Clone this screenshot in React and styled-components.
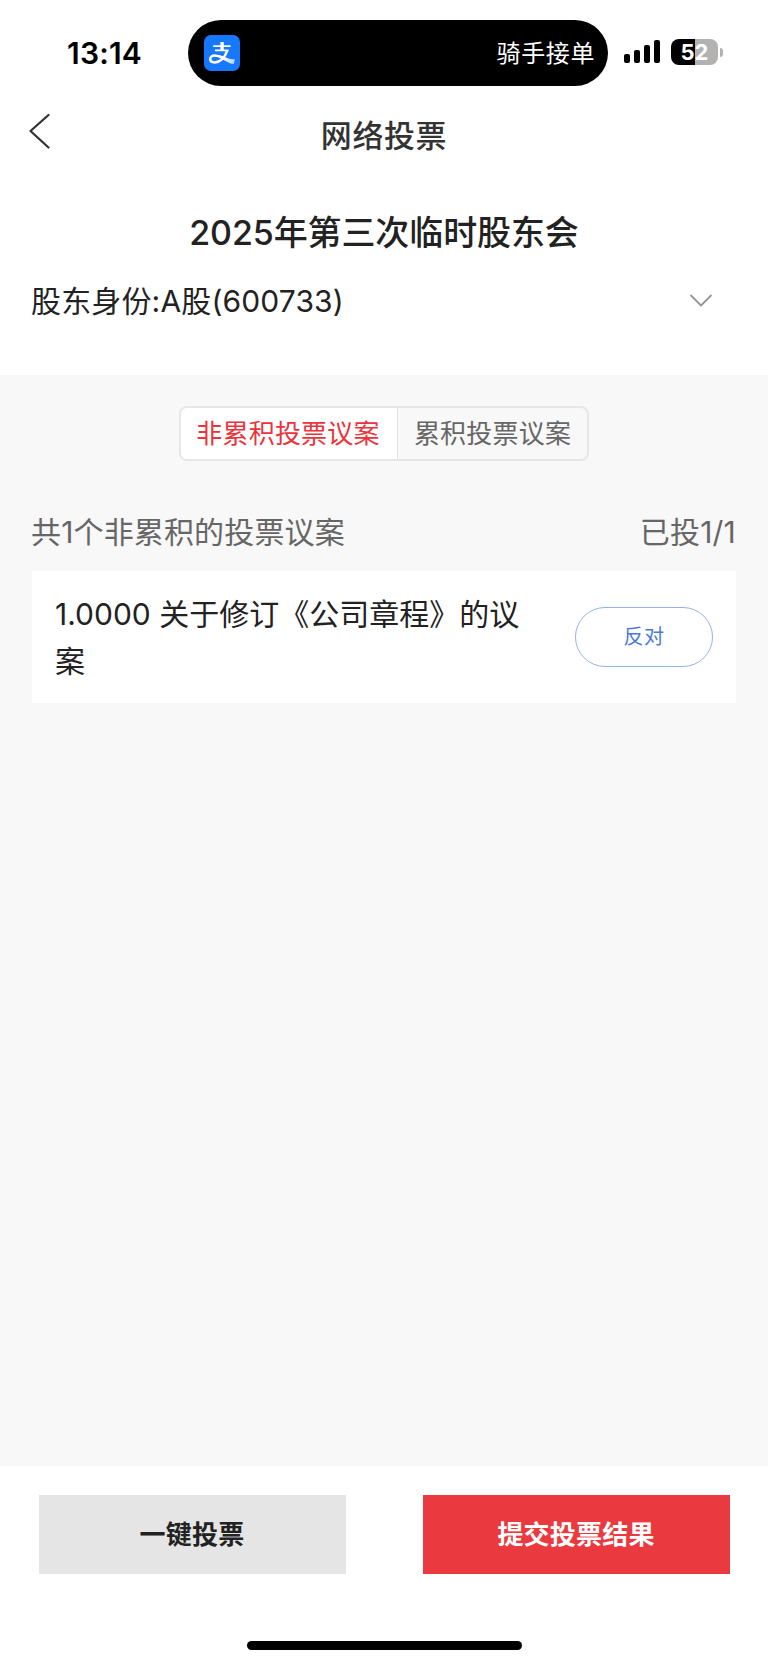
import React, { useState } from 'react';
import styled, { createGlobalStyle } from 'styled-components';

const bars = [9, 13, 18, 23];

const tabs = ['非累积投票议案', '累积投票议案'];

const App = () => {
  const [active, setActive] = useState(0);

  return (
    <Page>
      <GlobalStyle />
      <StatusBar>
        <Time>13:14</Time>
        <Island>
          <PayLogo />
          <IslandText>骑手接单</IslandText>
        </Island>
        <Signal>
          {bars.map((h) => (
            <Bar key={h} $h={h} />
          ))}
        </Signal>
        <Battery>52</Battery>
        <BatteryCap />
      </StatusBar>

      <NavBar>
        <BackButton aria-label="返回">
          <svg width="24" height="38" viewBox="0 0 24 38" fill="none">
            <path d="M20.5 3L2.5 19L20.5 35.5" stroke="#333" strokeWidth="2.3" strokeLinecap="round" strokeLinejoin="round" />
          </svg>
        </BackButton>
        <NavTitle>网络投票</NavTitle>
      </NavBar>

      <Meeting>
        <MeetingTitle>2025年第三次临时股东会</MeetingTitle>
        <Identity>
          <IdentityText>股东身份:A股(600733)</IdentityText>
          <svg width="24" height="14" viewBox="0 0 24 14" fill="none">
            <path d="M2 1.5L12 11.5L22 1.5" stroke="#969696" strokeWidth="1.8" strokeLinecap="round" strokeLinejoin="round" />
          </svg>
        </Identity>
      </Meeting>

      <Content>
        <Tabs>
          {tabs.map((tab, i) => (
            <Tab key={tab} $active={i === active} onClick={() => setActive(i)}>
              {tab}
            </Tab>
          ))}
        </Tabs>
        <Summary>
          <Count>共1个非累积的投票议案</Count>
          <Voted>已投1/1</Voted>
        </Summary>
        <Card>
          <Proposal>1.0000 关于修订《公司章程》的议案</Proposal>
          <Vote>反对</Vote>
        </Card>
      </Content>

      <Footer>
        <Actions>
          <Action>一键投票</Action>
          <Action $primary>提交投票结果</Action>
        </Actions>
        <HomeIndicator />
      </Footer>
    </Page>
  );
};

const PayLogo = () => (
  <svg width="36" height="36" viewBox="0 0 36 36" fill="none">
    <defs>
      <linearGradient id="tail" x1="18" y1="22" x2="31" y2="28" gradientUnits="userSpaceOnUse">
        <stop offset="0" stopColor="#fff" />
        <stop offset="1" stopColor="#fff" stopOpacity="0.65" />
      </linearGradient>
    </defs>
    <rect width="36" height="36" rx="7" fill="#1677ff" />
    <path d="M9.2 11.2H26.6M11 15.4H24.6" stroke="#fff" strokeWidth="1.8" />
    <path d="M16.4 7H19.8V15.6H16.4Z" fill="#fff" />
    <path d="M23.4 15.2C21.6 20.6 17.6 27.4 10.6 27.4C4.8 27.4 4.6 20.6 10.8 20.6C14 20.6 16.4 21.8 19.4 23.2" stroke="#fff" strokeWidth="2.5" />
    <path d="M13.6 19.9C19 20.1 23.6 24.4 30.9 24.2L29.8 28.9C24.4 28.9 20 24.6 13.6 21.8Z" fill="url(#tail)" />
  </svg>
);

// Styled components
const GlobalStyle = createGlobalStyle`
  body {
    margin: 0;
    background: #fff;
  }

  * {
    box-sizing: border-box;
  }

  button {
    font: inherit;
    padding: 0;
    border: none;
    background: none;
  }

  svg {
    display: block;
    flex-shrink: 0;
  }
`;

const Page = styled.div`
  display: flex;
  flex-direction: column;
  width: 768px;
  height: 1665px;
  overflow: hidden;
  background: #fff;
  color: #222;
  font-family: "Inter", "Noto Sans CJK SC", sans-serif;
  white-space: nowrap;
`;

const StatusBar = styled.div`
  display: flex;
  align-items: center;
  height: 86px;
  padding: 20px 0 0 67px;
  color: #000;
`;

const Time = styled.div`
  width: 121px;
  font-size: 30px;
  font-weight: 600;
  letter-spacing: 0.2px;
  line-height: 66px;
`;

const Island = styled.div`
  display: flex;
  justify-content: space-between;
  align-items: center;
  width: 420px;
  height: 66px;
  padding: 0 13px 0 16px;
  border-radius: 33px;
  background: #000;
`;

const IslandText = styled.span`
  padding-top: 1px;
  color: #fff;
  font-size: 24px;
  letter-spacing: 0.6px;
  line-height: 66px;
`;

const Signal = styled.div`
  display: flex;
  align-items: flex-end;
  gap: 4px;
  height: 23px;
  margin: -3px 11px 0 16px;
`;

const Bar = styled.div`
  width: 6px;
  height: ${({ $h }) => $h}px;
  border-radius: 2px;
  background: #000;
`;

const Battery = styled.div`
  width: 47px;
  height: 26px;
  margin-top: -2px;
  border-radius: 8px;
  background: linear-gradient(90deg, #000 24px, #b2b2b2 24px);
  color: #fff;
  font-size: 22px;
  font-weight: 700;
  line-height: 26px;
  text-align: center;
`;

const BatteryCap = styled.div`
  width: 3px;
  height: 9px;
  margin: -2px 0 0 2px;
  border-radius: 0 4px 4px 0;
  background: #b2b2b2;
`;

const NavBar = styled.div`
  display: grid;
  grid-template-columns: 60px 1fr 60px;
  align-items: start;
  height: 110px;
  padding-top: 26px;
`;

const BackButton = styled.button`
  width: 60px;
  padding-left: 28px;
`;

const NavTitle = styled.h1`
  margin: 0;
  color: #333;
  font-size: 31px;
  font-weight: 500;
  letter-spacing: 0.6px;
  line-height: 48px;
  text-align: center;
`;

const Meeting = styled.div`
  height: 179px;
  padding: 13px 55px 0 31px;
`;

const MeetingTitle = styled.h2`
  margin: 0 -24px 0 0;
  font-size: 34px;
  font-weight: 500;
  letter-spacing: -0.1px;
  line-height: 48px;
  text-align: center;
`;

const Identity = styled.div`
  display: flex;
  justify-content: space-between;
  align-items: center;
  height: 44px;
  margin-top: 22px;
`;

const IdentityText = styled.span`
  font-size: 30px;
  letter-spacing: 0.15px;
  line-height: 44px;
`;

const Content = styled.div`
  display: flex;
  flex-direction: column;
  height: 1091px;
  padding: 31px 32px 0;
  background: #f8f8f8;
`;

const Tabs = styled.div`
  display: flex;
  align-self: center;
  width: 410px;
  height: 55px;
  overflow: hidden;
  border: 2px solid #e6e6e6;
  border-radius: 8px;
`;

const Tab = styled.button`
  flex: ${({ $active }) => ($active ? '0 0 216px' : '1')};
  padding-right: ${({ $active }) => ($active ? '2px' : '0')};
  background: ${({ $active }) => ($active ? '#fff' : 'transparent')};
  color: ${({ $active }) => ($active ? '#eb333c' : '#666')};
  font-size: 26px;
  letter-spacing: 0.2px;
  line-height: 50px;

  & + & {
    border-left: 1px solid #e0e0e0;
  }
`;

const Summary = styled.div`
  display: flex;
  justify-content: space-between;
  height: 44px;
  margin: 49px 0 17px;
  color: #666;
  font-size: 30px;
  line-height: 44px;
`;

const Count = styled.span`
  margin-left: -1px;
  letter-spacing: 0.15px;
`;

const Voted = styled.span`
  letter-spacing: 0.2px;
`;

const Card = styled.div`
  display: flex;
  justify-content: space-between;
  align-items: center;
  height: 132px;
  padding: 0 23px 0 24px;
  background: #fff;
`;

const Proposal = styled.div`
  width: 480px;
  margin-left: -1px;
  padding-top: 1px;
  font-size: 30px;
  line-height: 47px;
  white-space: normal;
`;

const Vote = styled.button`
  width: 138px;
  height: 60px;
  padding-top: 1px;
  border: 1px solid #94b3ec;
  border-radius: 30px;
  color: #4a7ad8;
  font-size: 20px;
  letter-spacing: 0.4px;
  line-height: 57px;
`;

const Footer = styled.div`
  display: flex;
  flex-direction: column;
  align-items: center;
  height: 199px;
  padding-top: 29px;
`;

const Actions = styled.div`
  display: flex;
  gap: 77px;
`;

const Action = styled.button`
  width: 307px;
  height: 79px;
  padding-top: 1px;
  background: ${({ $primary }) => ($primary ? '#ea3a40' : '#e5e5e5')};
  color: ${({ $primary }) => ($primary ? '#fff' : '#222')};
  font-size: 26px;
  font-weight: 700;
  letter-spacing: 0.2px;
  line-height: 78px;
`;

const HomeIndicator = styled.div`
  width: 275px;
  height: 9px;
  margin-top: 67px;
  border-radius: 5px;
  background: #000;
`;

export default App;
